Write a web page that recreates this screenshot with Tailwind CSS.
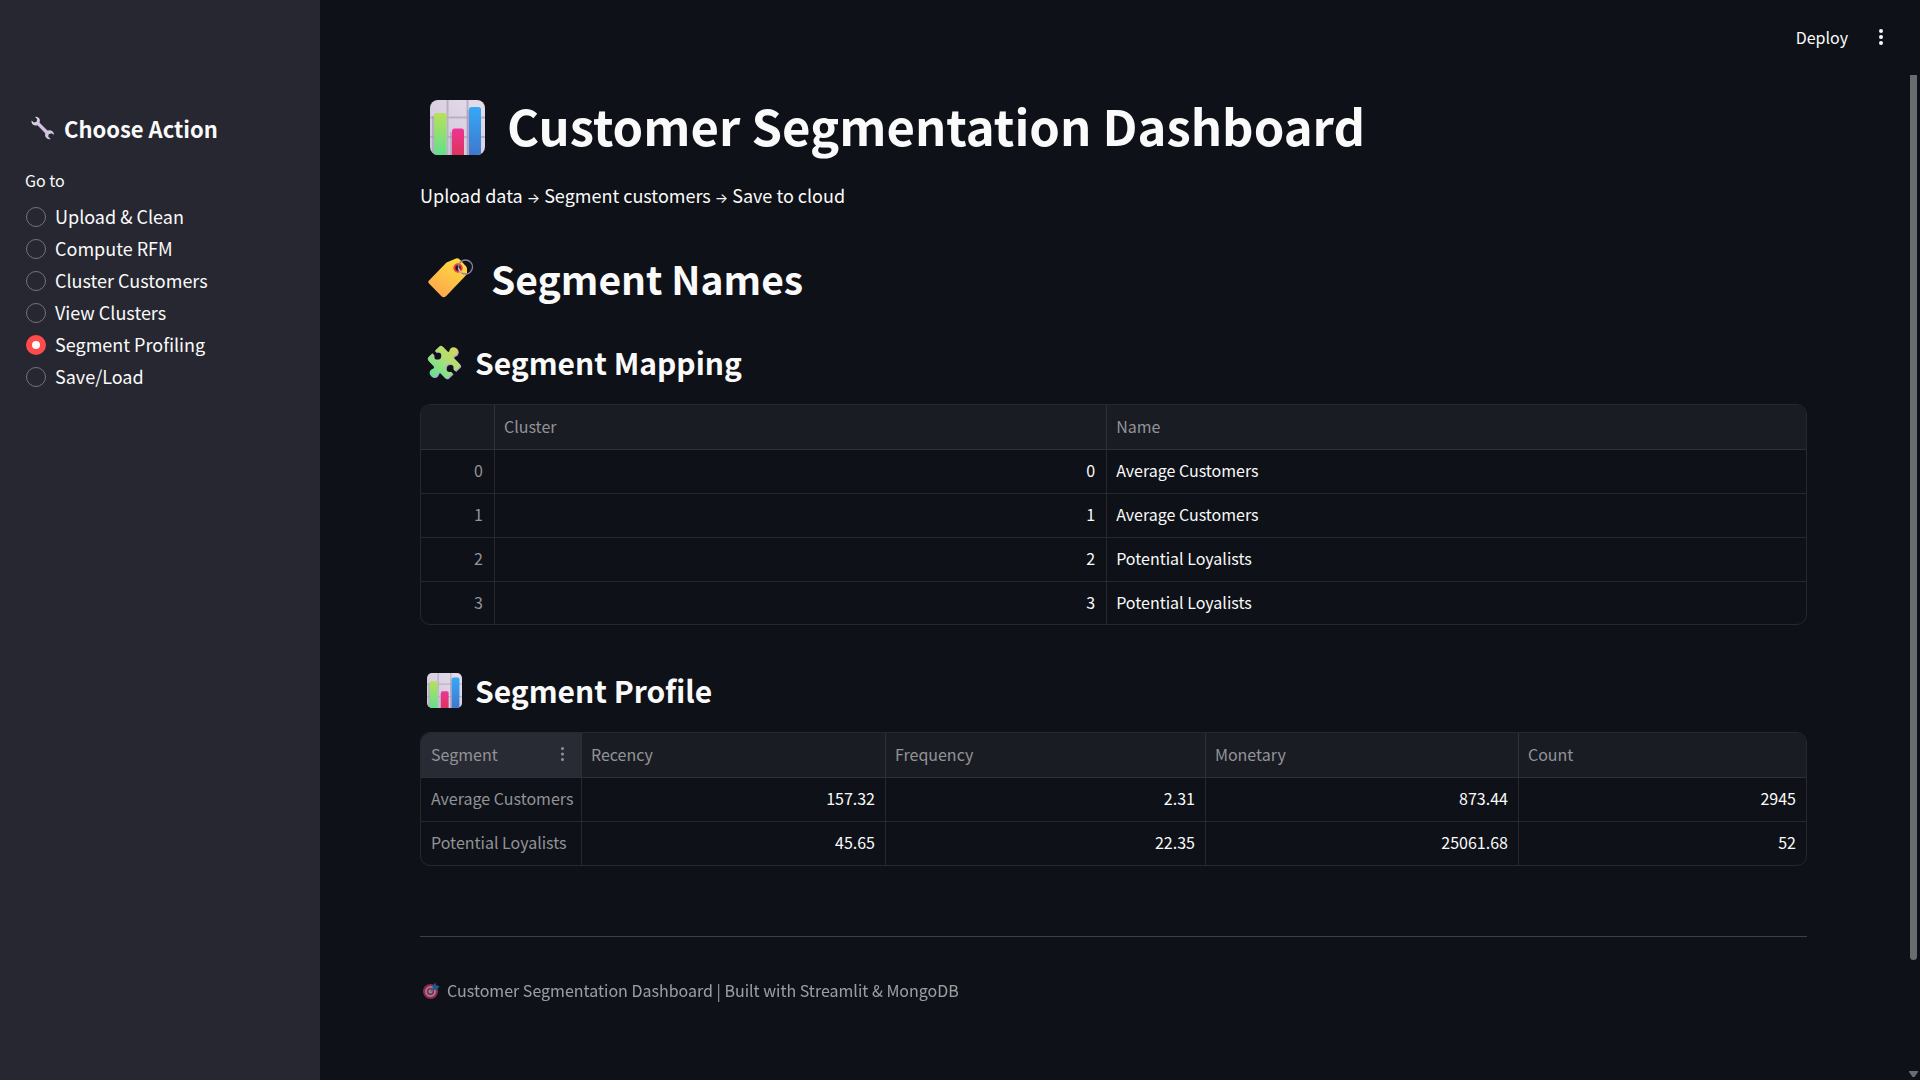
<!DOCTYPE html>
<html lang="en">
<head>
<meta charset="utf-8">
<title>Customer Segmentation Dashboard</title>
<script src="https://cdn.jsdelivr.net/npm/@tailwindcss/browser@4"></script>
</head>
<body class="min-h-screen bg-[#0e1117] text-[#fafafa] font-['Noto_Sans_CJK_SC',sans-serif]">

<!-- Shared icon symbols -->
<svg class="absolute size-0" aria-hidden="true">
  <defs>
    <linearGradient id="gPanel" x1="0" y1="1" x2="1" y2="0"><stop offset="0" stop-color="#cfc3dc"/><stop offset="1" stop-color="#e4deea"/></linearGradient>
    <linearGradient id="gGreen" x1="0" y1="0" x2="0" y2="1"><stop offset="0" stop-color="#b8e158"/><stop offset="1" stop-color="#63df8c"/></linearGradient>
    <linearGradient id="gPink" x1="0" y1="0" x2="0" y2="1"><stop offset="0" stop-color="#ee3593"/><stop offset="1" stop-color="#dc345c"/></linearGradient>
    <linearGradient id="gBlue" x1="0" y1="0" x2="0" y2="1"><stop offset="0" stop-color="#36a8f8"/><stop offset="1" stop-color="#3f78cd"/></linearGradient>
    <linearGradient id="gTag" x1="0.8" y1="0.1" x2="0.3" y2="1"><stop offset="0" stop-color="#ffd93f"/><stop offset="1" stop-color="#fda74c"/></linearGradient>
    <linearGradient id="gPuzzle" gradientUnits="userSpaceOnUse" x1="85" y1="12" x2="15" y2="90"><stop offset="0" stop-color="#d3d75c"/><stop offset="0.5" stop-color="#a4e07a"/><stop offset="1" stop-color="#66e093"/></linearGradient>
    <linearGradient id="gWrench" x1="0" y1="0" x2="1" y2="1"><stop offset="0" stop-color="#e3dbea"/><stop offset="0.5" stop-color="#cdbbe2"/><stop offset="1" stop-color="#d9cfe3"/></linearGradient>
    <clipPath id="chartClip"><rect width="55" height="55" rx="8"/></clipPath>
    <mask id="puzzleMask" maskUnits="userSpaceOnUse" x="-5" y="-5" width="120" height="120">
      <rect x="-5" y="-5" width="120" height="120" fill="#fff"/>
      <circle cx="32" cy="33" r="12"/><path d="M14 23 22 15 33 30 28 37Z"/>
      <circle cx="70" cy="71" r="12"/><path d="M90 83 82 91 68 76 74 68Z"/>
    </mask>
    <g id="puzzleShape"><path d="M38 5Q43 0 48 5L100 58Q105 63 100 68L65 101Q60 105 55 101L4 48Q0 43 4 38Z"/><circle cx="82" cy="20" r="13"/><path d="M62 24 72 18 86 30 78 42Z"/><circle cx="21" cy="86" r="13"/><path d="M24 64 40 80 32 90 16 80Z"/></g>
  </defs>
  <symbol id="chart" viewBox="0 0 55 55">
    <g clip-path="url(#chartClip)">
      <rect width="55" height="55" fill="url(#gPanel)"/>
      <path d="M17.500 0V55M37.500 0V55M0 17.500H55M0 37H55" stroke="#b9b1c2" stroke-width="2" fill="none"/>
      <path d="M2 55V16h3v39M20 55V32h3v23M37 55V10h3v45" fill="#a595bd" opacity=".6"/>
      <path d="M4 55V15.500q0-2.500 2.500-2.500h7.500q2.500 0 2.500 2.500V55Z" fill="url(#gGreen)"/>
      <path d="M22 55V31q0-2.500 2.500-2.500h7q2.500 0 2.500 2.500V55Z" fill="url(#gPink)"/>
      <path d="M39 55V9.500Q39 7 41.500 7h7q2.500 0 2.500 2.500V55Z" fill="url(#gBlue)"/>
    </g>
  </symbol>
  <symbol id="tag" viewBox="0 0 46 40">
    <path d="M1 22.500 18.500 4.500 28 .5q2-.6 3.500.8l6.500 7q1 1.200 1 2.700v4q0 1.200-1 2.300L18 38.300q-2.500 2-4.500 0L1 25.500q-1.500-1.500 0-3Z" fill="url(#gTag)"/>
    <circle cx="30" cy="10" r="3.700" fill="#2b1723" stroke="#e9413c" stroke-width="2"/>
    <circle cx="37.500" cy="9" r="7" fill="none" stroke="#93809e" stroke-width="1.300"/>
    <path d="M30.500 10q.5 3 3 4.700" stroke="#d9c9e0" stroke-width="1.200" fill="none"/>
  </symbol>
  <symbol id="puzzle" viewBox="0 0 108 108">
    <g transform="translate(3 3)"><g mask="url(#puzzleMask)"><use href="#puzzleShape" fill="#b79fd8"/></g></g>
    <g mask="url(#puzzleMask)"><use href="#puzzleShape" fill="url(#gPuzzle)"/></g>
  </symbol>
  <symbol id="wrench" viewBox="0 0 24 24">
    <path d="M4 .8Q6.500.3 8.200 2.300 9.600 4.200 8.600 6.800L16.500 14.600Q19.500 13.700 21.600 15.400 23.200 16.800 23 18.700L20.500 17.300 17.600 18.200 17.300 20.800 19.800 23.200Q17.200 23.700 15.200 21.800 13.500 19.700 14.200 17.200L6.500 9.200Q3.700 10 1.800 8.500.2 7 .5 4.600L3 6.600 5.600 5.700 6.200 3.300Z" fill="url(#gWrench)"/>
  </symbol>
  <symbol id="target" viewBox="0 0 17 17">
    <circle cx="7.500" cy="9.500" r="7.500" fill="#f1346f"/><circle cx="7.500" cy="9.500" r="5.400" fill="#e6dcec"/><circle cx="7.500" cy="9.500" r="3.700" fill="#f1346f"/><circle cx="7.500" cy="9.500" r="2" fill="#e6dcec"/>
    <path d="m7.500 9.500 4-4" stroke="#a18fc0" stroke-width="1.200"/>
    <path d="M9.600 4.600 12.400.5l.6 2.600L16.600 4.600 13.500 7.800 9.800 8Z" fill="#1e8fe0"/>
  </symbol>
</svg>

<div class="flex min-h-screen">
  <aside class="w-80 shrink-0 bg-[#262730] px-[25px] pt-28">
    <h2 class="flex h-8 items-center gap-[9px] pl-[6px] text-[22px] font-semibold"><svg class="size-6"><use href="#wrench"/></svg>Choose Action</h2>
    <fieldset class="mt-6">
      <legend class="h-6 text-base leading-6">Go to</legend>
      <div class="mt-2 pl-px text-lg">
        <label class="flex h-8 items-center gap-[9px]"><input type="radio" name="page" class="mt-0.5 size-5 appearance-none rounded-full border border-[#74757b] bg-[#262730] checked:border-[6px] checked:border-[#ff4b4b] checked:bg-[#fafafa]">Upload &amp; Clean</label>
        <label class="flex h-8 items-center gap-[9px]"><input type="radio" name="page" class="mt-0.5 size-5 appearance-none rounded-full border border-[#74757b] bg-[#262730] checked:border-[6px] checked:border-[#ff4b4b] checked:bg-[#fafafa]">Compute RFM</label>
        <label class="flex h-8 items-center gap-[9px]"><input type="radio" name="page" class="mt-0.5 size-5 appearance-none rounded-full border border-[#74757b] bg-[#262730] checked:border-[6px] checked:border-[#ff4b4b] checked:bg-[#fafafa]">Cluster Customers</label>
        <label class="flex h-8 items-center gap-[9px]"><input type="radio" name="page" class="mt-0.5 size-5 appearance-none rounded-full border border-[#74757b] bg-[#262730] checked:border-[6px] checked:border-[#ff4b4b] checked:bg-[#fafafa]">View Clusters</label>
        <label class="flex h-8 items-center gap-[9px]"><input type="radio" name="page" checked class="mt-0.5 size-5 appearance-none rounded-full border border-[#74757b] bg-[#262730] checked:border-[6px] checked:border-[#ff4b4b] checked:bg-[#fafafa]">Segment Profiling</label>
        <label class="flex h-8 items-center gap-[9px]"><input type="radio" name="page" class="mt-0.5 size-5 appearance-none rounded-full border border-[#74757b] bg-[#262730] checked:border-[6px] checked:border-[#ff4b4b] checked:bg-[#fafafa]">Save/Load</label>
      </div>
    </fieldset>
  </aside>

  <div class="relative flex min-w-0 grow flex-col pr-[13px]">
    <header class="flex h-[75px] items-center justify-end gap-[23px] pr-4 pb-0.5">
      <button type="button" class="text-base leading-6">Deploy</button>
      <button type="button" aria-label="Main menu" class="flex w-5 justify-center"><svg class="h-[18px] w-1" viewBox="0 0 4 18" fill="currentColor"><circle cx="2" cy="3" r="2"/><circle cx="2" cy="9" r="2"/><circle cx="2" cy="15" r="2"/></svg></button>
    </header>

    <main class="px-[100px] pt-[22px]">
      <h1 class="flex h-14 items-center gap-[22px] pl-[10px] text-[49px] font-bold whitespace-nowrap"><svg class="mt-1 size-[55px] shrink-0"><use href="#chart"/></svg>Customer Segmentation Dashboard</h1>
      <p class="mt-[30px] h-6 text-lg leading-6">Upload data <span class="font-['Inter'] text-sm">→</span> Segment customers <span class="font-['Inter'] text-sm">→</span> Save to cloud</p>
      <h2 class="mt-11 flex h-[54px] items-center gap-[17px] pl-2 text-[39px] font-semibold"><svg class="h-10 w-[46px] shrink-0"><use href="#tag"/></svg>Segment Names</h2>

      <h3 class="mt-9 flex h-[42px] items-center gap-[13px] pl-[7px] text-[30px] font-semibold"><svg class="size-[35px] shrink-0"><use href="#puzzle"/></svg>Segment Mapping</h3>
      <div class="mt-[21px] overflow-hidden rounded-[10px] border border-[#26282d]">
        <table class="w-full table-fixed border-separate border-spacing-0 text-base leading-6 [&_td]:h-11 [&_td]:border-b [&_td]:border-[#26282d] [&_td]:pt-0 [&_td]:pr-[11px] [&_td]:pb-[3px] [&_td]:pl-[9px] [&_td:not(:last-child)]:border-r [&_th]:h-[45px] [&_th]:border-b [&_th]:border-[#2d3037] [&_th]:px-[9px] [&_th]:pt-0 [&_th]:pb-0.5 [&_th]:text-left [&_th]:font-normal [&_th:not(:last-child)]:border-r [&_tr:last-child_td]:h-[42px] [&_tr:last-child_td]:border-b-0">
          <thead class="bg-[#1a1c24] text-[#929397]"><tr><th class="w-[74px]"></th><th class="w-[44.2%]">Cluster</th><th>Name</th></tr></thead>
          <tbody>
            <tr><td class="text-right text-[#929397]">0</td><td class="text-right">0</td><td>Average Customers</td></tr>
            <tr><td class="text-right text-[#929397]">1</td><td class="text-right">1</td><td>Average Customers</td></tr>
            <tr><td class="text-right text-[#929397]">2</td><td class="text-right">2</td><td>Potential Loyalists</td></tr>
            <tr><td class="text-right text-[#929397]">3</td><td class="text-right">3</td><td>Potential Loyalists</td></tr>
          </tbody>
        </table>
      </div>

      <h3 class="mt-11 flex h-[42px] items-center gap-[13px] pl-[7px] text-[30px] font-semibold"><svg class="size-[35px] shrink-0"><use href="#chart"/></svg>Segment Profile</h3>
      <div class="mt-[21px] overflow-hidden rounded-[10px] border border-[#26282d]">
        <table class="w-full table-fixed border-separate border-spacing-0 text-base leading-6 [&_td]:h-11 [&_td]:border-b [&_td]:border-[#26282d] [&_td]:px-[10px] [&_td]:pt-0 [&_td]:pb-[3px] [&_td:not(:last-child)]:border-r [&_th]:h-[45px] [&_th]:border-b [&_th]:border-[#2d3037] [&_th]:px-[9px] [&_th]:pt-0 [&_th]:pb-0.5 [&_th]:text-left [&_th]:font-normal [&_th:not(:last-child)]:border-r [&_tr:last-child_td]:h-[43px] [&_tr:last-child_td]:border-b-0">
          <thead class="bg-[#1a1c24] text-[#929397]"><tr>
            <th class="w-[161px] bg-[#292b34]"><div class="flex items-center justify-between pr-2 pl-px">Segment<button type="button" aria-label="Column menu"><svg class="h-4 w-[3px]" viewBox="0 0 3 16" fill="currentColor"><circle cx="1.500" cy="2.500" r="1.500"/><circle cx="1.500" cy="8" r="1.500"/><circle cx="1.500" cy="13.500" r="1.500"/></svg></button></div></th>
            <th class="w-[21.95%]">Recency</th><th class="w-[23.1%]">Frequency</th><th class="w-[22.6%]">Monetary</th><th>Count</th></tr></thead>
          <tbody class="text-right">
            <tr><td class="text-left whitespace-nowrap text-[#929397]">Average Customers</td><td>157.32</td><td>2.31</td><td>873.44</td><td>2945</td></tr>
            <tr><td class="text-left whitespace-nowrap text-[#929397]">Potential Loyalists</td><td>45.65</td><td>22.35</td><td>25061.68</td><td>52</td></tr>
          </tbody>
        </table>
      </div>

      <hr class="mt-[70px] border-[#3d4045]">
      <footer class="mt-[41px] flex h-6 items-center gap-[7px] pl-[3px] text-base opacity-60"><svg class="size-[17px] shrink-0"><use href="#target"/></svg>Customer Segmentation Dashboard | Built with Streamlit &amp; MongoDB</footer>
    </main>

    <!-- Scroll thumb and down arrow along the right edge -->
    <div class="absolute top-[75px] right-0 bottom-0 flex w-[13px] flex-col items-center justify-between pb-[3px]" aria-hidden="true">
      <div class="h-[88.3%] w-[7px] rounded-b-full bg-[#6b6c70]"></div>
      <svg class="h-[6px] w-[9px]" viewBox="0 0 9 6"><path d="M0 0h9v1L5.500 6h-2L0 1Z" fill="#6b6c70"/></svg>
    </div>
  </div>
</div>
</body>
</html>
